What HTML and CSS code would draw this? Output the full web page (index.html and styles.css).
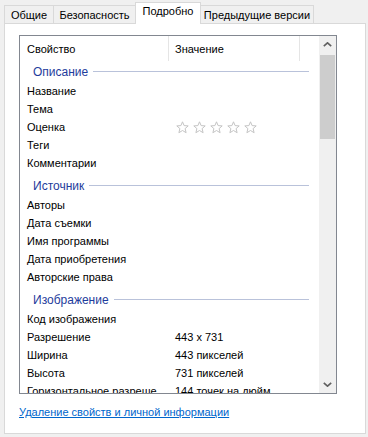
FILE: index.html
```html
<!DOCTYPE html>
<html lang="ru">
<head>
<meta charset="utf-8">
<link rel="stylesheet" href="styles.css">
</head>
<body>
<div class="window">
  <div class="tabs">
    <div class="tab t1">Общие</div>
    <div class="tab t2">Безопасность</div>
    <div class="tab t3 active">Подробно</div>
    <div class="tab t4">Предыдущие версии</div>
  </div>
  <div class="panel">
    <div class="list">
      <div class="list-body">
        <div class="header">
          <div class="hcol hname">Свойство</div>
          <div class="hcol hvalue">Значение</div>
          <div class="hcol hrest"></div>
        </div>
        <div class="group first"><span class="gtitle">Описание</span><span class="gline"></span></div>
        <div class="row"><span class="name">Название</span><span class="value"></span></div>
        <div class="row"><span class="name">Тема</span><span class="value"></span></div>
        <div class="row"><span class="name">Оценка</span><span class="value stars">
          <svg class="star" viewBox="0 0 13 13"><polygon points="6.5,0.8 8.1,4.6 12.2,4.9 9.1,7.6 10.1,11.7 6.5,9.5 2.9,11.7 3.9,7.6 0.8,4.9 4.9,4.6"/></svg>
          <svg class="star" viewBox="0 0 13 13"><polygon points="6.5,0.8 8.1,4.6 12.2,4.9 9.1,7.6 10.1,11.7 6.5,9.5 2.9,11.7 3.9,7.6 0.8,4.9 4.9,4.6"/></svg>
          <svg class="star" viewBox="0 0 13 13"><polygon points="6.5,0.8 8.1,4.6 12.2,4.9 9.1,7.6 10.1,11.7 6.5,9.5 2.9,11.7 3.9,7.6 0.8,4.9 4.9,4.6"/></svg>
          <svg class="star" viewBox="0 0 13 13"><polygon points="6.5,0.8 8.1,4.6 12.2,4.9 9.1,7.6 10.1,11.7 6.5,9.5 2.9,11.7 3.9,7.6 0.8,4.9 4.9,4.6"/></svg>
          <svg class="star" viewBox="0 0 13 13"><polygon points="6.5,0.8 8.1,4.6 12.2,4.9 9.1,7.6 10.1,11.7 6.5,9.5 2.9,11.7 3.9,7.6 0.8,4.9 4.9,4.6"/></svg>
        </span></div>
        <div class="row"><span class="name">Теги</span><span class="value"></span></div>
        <div class="row"><span class="name">Комментарии</span><span class="value"></span></div>
        <div class="group"><span class="gtitle">Источник</span><span class="gline"></span></div>
        <div class="row"><span class="name">Авторы</span><span class="value"></span></div>
        <div class="row"><span class="name">Дата съемки</span><span class="value"></span></div>
        <div class="row"><span class="name">Имя программы</span><span class="value"></span></div>
        <div class="row"><span class="name">Дата приобретения</span><span class="value"></span></div>
        <div class="row"><span class="name">Авторские права</span><span class="value"></span></div>
        <div class="group"><span class="gtitle">Изображение</span><span class="gline"></span></div>
        <div class="row"><span class="name">Код изображения</span><span class="value"></span></div>
        <div class="row"><span class="name">Разрешение</span><span class="value">443 x 731</span></div>
        <div class="row"><span class="name">Ширина</span><span class="value">443 пикселей</span></div>
        <div class="row"><span class="name">Высота</span><span class="value">731 пикселей</span></div>
        <div class="row"><span class="name">Горизонтальное разреше</span><span class="value">144 точек на дюйм</span></div>
      </div>
      <div class="scrollbar">
        <div class="sbtn">
          <svg viewBox="0 0 9 5" class="chev"><polyline points="0.8,4.2 4.5,0.8 8.2,4.2"/></svg>
        </div>
        <div class="track"><div class="thumb"></div></div>
        <div class="sbtn">
          <svg viewBox="0 0 9 5" class="chev"><polyline points="0.8,0.8 4.5,4.2 8.2,0.8"/></svg>
        </div>
      </div>
    </div>
    <a class="link" href="#">Удаление свойств и личной информации</a>
  </div>
</div>
</body>
</html>
```

FILE: styles.css
```css
* { box-sizing: border-box; }
html, body { margin: 0; padding: 0; }
body {
  background: #f0f0f0;
  font-family: "Liberation Sans", Arial, sans-serif;
  font-size: 11px;
  color: #000;
  width: 368px;
  height: 437px;
  overflow: hidden;
}
.window { display: flex; flex-direction: column; }
.tabs {
  display: flex;
  align-items: flex-end;
  height: 24px;
  padding-left: 4px;
}
.tab {
  height: 19px;
  border: 1px solid #d9d9d9;
  border-bottom: none;
  background: #f0f0f0;
  display: flex;
  align-items: center;
  justify-content: center;
  padding-bottom: 1px;
  margin-left: -1px;
  font-size: 11px;
}
.tab.t1 { width: 50px; margin-left: 0; }
.tab.t2 { width: 83px; }
.tab.t3 { width: 66px; }
.tab.t4 { width: 114px; }
.tab.active {
  height: 22px;
  background: #fff;
  position: relative;
  z-index: 1;
  padding-bottom: 5px;
}
.panel {
  margin: -1px 2px 0 4px;
  height: 411px;
  border: 1px solid #d9d9d9;
  background: #fff;
  display: flex;
  flex-direction: column;
  align-items: flex-start;
}
.list {
  margin: 11px 0 0 14px;
  width: 318px;
  height: 359px;
  border: 1px solid #828790;
  display: flex;
}
.list-body {
  flex: 1;
  overflow: hidden;
  display: flex;
  flex-direction: column;
}
.header {
  display: flex;
  height: 25px;
  flex-shrink: 0;
}
.hcol {
  display: flex;
  align-items: center;
  border-right: 1px solid #e5e5e5;
}
.hname { width: 149px; padding-left: 7px; }
.hvalue { width: 131px; padding-left: 6px; }
.hrest { flex: 1; border-right: none; }
.group {
  display: flex;
  align-items: center;
  height: 21px;
  margin-top: 3px;
  padding: 0 10px 0 13px;
  flex-shrink: 0;
  color: #1e3c9c;
  font-size: 12px;
}
.group.first { margin-top: 0; }
.gline {
  flex: 1;
  height: 1px;
  background: #b9c2da;
  margin-left: 5px;
}
.row {
  display: flex;
  align-items: center;
  height: 18px;
  flex-shrink: 0;
  white-space: nowrap;
}
.name { width: 155px; padding-left: 7px; flex-shrink: 0; overflow: hidden; }
.value { display: flex; align-items: center; }
.stars { gap: 4px; margin-left: 1px; }
.star { width: 13px; height: 13px; display: block; }
.star polygon { fill: #fff; stroke: #c4c4c4; stroke-width: 1; stroke-linejoin: miter; }
.scrollbar {
  width: 17px;
  background: #f0f0f0;
  display: flex;
  flex-direction: column;
}
.sbtn {
  height: 17px;
  display: flex;
  align-items: center;
  justify-content: center;
}
.chev { width: 9px; height: 5px; display: block; }
.chev polyline { fill: none; stroke: #606060; stroke-width: 1.6; }
.track { flex: 1; padding-top: 2px; }
.thumb {
  height: 84px;
  margin: 0 1px;
  background: #cdcdcd;
}
.link {
  margin: 12px 0 0 14px;
  color: #0066cc;
  text-decoration: underline;
  font-size: 11px;
}
```
